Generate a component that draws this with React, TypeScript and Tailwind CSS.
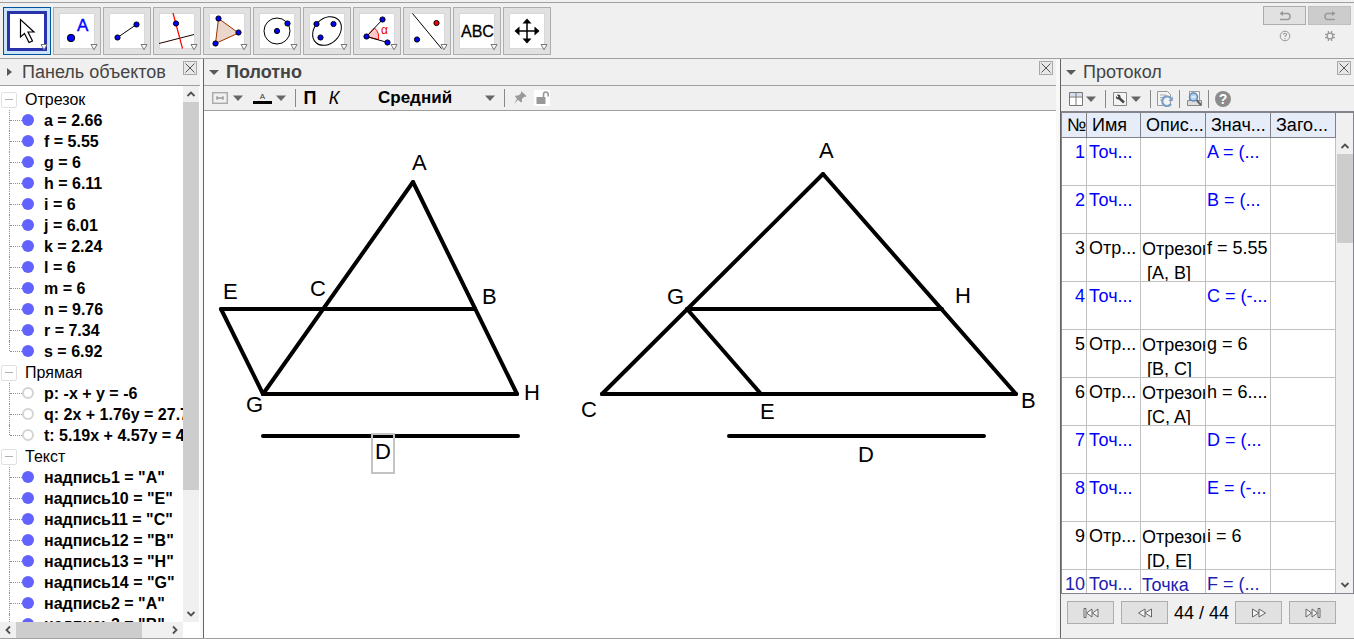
import type { ReactNode } from 'react';

type TreeGroup = {
    title: string;
    filled: boolean;
    items: string[];
};

const groups: TreeGroup[] = [
    {
        title: 'Отрезок',
        filled: true,
        items: [
            'a = 2.66',
            'f = 5.55',
            'g = 6',
            'h = 6.11',
            'i = 6',
            'j = 6.01',
            'k = 2.24',
            'l = 6',
            'm = 6',
            'n = 9.76',
            'r = 7.34',
            's = 6.92',
        ],
    },
    {
        title: 'Прямая',
        filled: false,
        items: ['p: -x + y = -6', 'q: 2x + 1.76y = 27.7', 't: 5.19x + 4.57y = 4'],
    },
    {
        title: 'Текст',
        filled: true,
        items: [
            'надпись1 = "A"',
            'надпись10 = "E"',
            'надпись11 = "C"',
            'надпись12 = "B"',
            'надпись13 = "H"',
            'надпись14 = "G"',
            'надпись2 = "A"',
            'надпись3 = "B"',
        ],
    },
];

type Step = {
    name: string;
    description?: string[];
    value: string;
    color: string;
};

const steps: Step[] = [
    { name: 'Точ...', value: 'A = (...', color: 'text-[#0000ff]' },
    { name: 'Точ...', value: 'B = (...', color: 'text-[#0000ff]' },
    { name: 'Отр...', description: ['Отрезок', '[A, B]'], value: 'f = 5.55', color: 'text-black' },
    { name: 'Точ...', value: 'C = (-...', color: 'text-[#0000ff]' },
    { name: 'Отр...', description: ['Отрезок', '[B, C]'], value: 'g = 6', color: 'text-black' },
    { name: 'Отр...', description: ['Отрезок', '[C, A]'], value: 'h = 6....', color: 'text-black' },
    { name: 'Точ...', value: 'D = (...', color: 'text-[#0000ff]' },
    { name: 'Точ...', value: 'E = (-...', color: 'text-[#0000ff]' },
    { name: 'Отр...', description: ['Отрезок', '[D, E]'], value: 'i = 6', color: 'text-black' },
    { name: 'Точ...', description: ['Точка'], value: 'F = (...', color: 'text-[#2020b0]' },
];

const segments: [number, number, number, number][] = [
    [209, 71, 59, 283],
    [209, 71, 313, 283],
    [59, 283, 313, 283],
    [17, 198, 271, 198],
    [17, 198, 59, 283],
    [59, 325, 314, 325],
    [619, 63, 398, 283],
    [619, 63, 812, 283],
    [398, 283, 812, 283],
    [483, 198, 738, 198],
    [483, 198, 557, 283],
    [525, 325, 780, 325],
];

const labels: [string, number, number][] = [
    ['A', 208, 59],
    ['E', 19, 188],
    ['C', 106, 185],
    ['B', 278, 193],
    ['G', 42, 301],
    ['H', 320, 289],
    ['D', 171, 348],
    ['A', 615, 47],
    ['G', 463, 193],
    ['H', 751, 192],
    ['C', 377, 306],
    ['E', 556, 308],
    ['B', 817, 297],
    ['D', 654, 351],
];

function Dot({ x, y, r = 2.6, fill = '#0000ff' }: { x: number; y: number; r?: number; fill?: string }) {
    return <circle cx={x} cy={y} r={r} fill={fill} stroke="#000" />;
}

const tools: { label: string; icon: ReactNode }[] = [
    {
        label: 'Перемещать',
        icon: <path d="M11.5 6.5v17.5l4-3.5 4.5 9 3.5-1.5-4.5-9h6z" fill="#fff" stroke="#000" strokeWidth="1.2" />,
    },
    {
        label: 'Точка',
        icon: (
            <>
                <Dot x={12} y={25} r={3.7} />
                <text x="18" y="18" fontSize="17" fill="#0000ff" stroke="#0000ff" strokeWidth="0.4">A</text>
            </>
        ),
    },
    {
        label: 'Отрезок',
        icon: (
            <>
                <path d="M8.5 24.5l19-13" stroke="#000" />
                <Dot x={8.5} y={24.5} />
                <Dot x={27.5} y={11.5} />
            </>
        ),
    },
    {
        label: 'Перпендикулярная прямая',
        icon: (
            <>
                <path d="M0 30.5l35-9" stroke="#200" />
                <path d="M14 0l9.5 35.5" stroke="#f00" strokeWidth="1.2" />
                <Dot x={17} y={10.5} />
            </>
        ),
    },
    {
        label: 'Многоугольник',
        icon: (
            <>
                <path d="M9.5 5.5l20 14.5-23 10.5z" fill="#ebd6cb" stroke="#993300" />
                <Dot x={9.5} y={5.5} />
                <Dot x={29.5} y={19.5} />
                <Dot x={6.5} y={30.5} />
            </>
        ),
    },
    {
        label: 'Окружность',
        icon: (
            <>
                <circle cx="18" cy="18" r="13" stroke="#000" />
                <Dot x={18} y={18} />
                <Dot x={28.5} y={10.5} />
            </>
        ),
    },
    {
        label: 'Эллипс',
        icon: (
            <>
                <ellipse cx="18" cy="18" rx="16" ry="12.5" transform="rotate(-45 18 18)" stroke="#000" />
                <Dot x={7.5} y={11} />
                <Dot x={24.5} y={11} />
                <Dot x={11.5} y={24.5} />
            </>
        ),
    },
    {
        label: 'Угол',
        icon: (
            <>
                <path d="M7.5 23.5l8-8.5a12 12 0 0 1 3.8 11.5z" fill="#ffc8c8" stroke="#f00" />
                <path d="M23.5 6.5l-16 17 21 6" stroke="#000" />
                <text x="22" y="21" fontSize="12" fill="#e00">α</text>
                <Dot x={7.5} y={23.5} />
                <Dot x={23.5} y={6.5} />
                <Dot x={28.5} y={29.5} />
            </>
        ),
    },
    {
        label: 'Отражение',
        icon: (
            <>
                <path d="M3.5 .5l29 35" stroke="#000" />
                <Dot x={8} y={26.5} />
                <Dot x={27.5} y={10} fill="#f00" />
            </>
        ),
    },
    {
        label: 'Надпись',
        icon: <text x="2" y="24" fontSize="16" fill="#000" stroke="#000" strokeWidth="0.3">ABC</text>,
    },
    {
        label: 'Переместить чертёж',
        icon: (
            <>
                <path d="M18 9v18M9 18h18" stroke="#000" strokeWidth="1.5" />
                <path d="M18 5.5l4.5 5h-9zM18 30.5l4.5-5h-9zM5.5 18l5-4.5v9zM30.5 18l-5-4.5v9z" fill="#000" />
            </>
        ),
    },
];

function Toolbar() {
    return (
        <header className="flex justify-between border-y border-[#a0a0a0] px-[3px]">
            <div className="flex gap-0.5 pt-1 pb-[3px]">
                {tools.map((tool, i) => (
                    <button
                        key={tool.label}
                        aria-label={tool.label}
                        className={`relative flex size-12 items-center justify-center border ${
                            i === 0 ? 'border-[#005499] bg-[#cce4f7]' : 'border-[#adadad] bg-[#e1e1e1]'
                        }`}
                    >
                        <span
                            className={
                                i === 0
                                    ? 'border-3 border-[#2832aa] bg-white'
                                    : 'border border-[#d8d8d8] bg-white'
                            }
                        >
                            <svg
                                viewBox="1 1 34 34"
                                className="size-[34px] overflow-visible"
                                fill="none"
                                fontFamily="Liberation Sans, sans-serif"
                            >
                                {tool.icon}
                            </svg>
                        </span>
                        <svg className="absolute right-0.5 bottom-[3px] size-2" viewBox="0 0 8 8">
                            <path d="M1 1.5h6L4 6.8z" fill="#fff" stroke="#777" />
                        </svg>
                    </button>
                ))}
            </div>
            <div className="grid grid-cols-2 content-start gap-x-0.5 gap-y-1 pt-[3px]">
                <button aria-label="Отменить" className="flex h-[19px] w-[43px] items-center justify-center border border-[#adadad] bg-[#e1e1e1]">
                    <svg className="h-2.5 w-3" viewBox="0 0 12 10" fill="none" stroke="#999" strokeWidth="1.5">
                        <path d="M1.500 2.500h7q2.500 0 2.500 3t-2.500 3H1" />
                        <path d="M.5 2.500L4 0v5z" fill="#999" stroke="none" />
                    </svg>
                </button>
                <button aria-label="Повторить" className="flex h-[19px] w-[43px] items-center justify-center border border-[#bfbfbf] bg-[#cccccc]">
                    <svg className="h-2.5 w-3" viewBox="0 0 12 10" fill="none" stroke="#999" strokeWidth="1.5">
                        <path d="M10.500 2.500h-7Q1 2.500 1 5.500t2.500 3H11" />
                        <path d="M11.500 2.500L8 0v5z" fill="#999" stroke="none" />
                    </svg>
                </button>
                <button aria-label="Справка" className="flex justify-center pt-px">
                    <svg className="size-3" viewBox="0 0 12 12" fill="none" stroke="#999">
                        <circle cx="6" cy="6" r="4.8" />
                        <path d="M4.4 4.8q0-1.6 1.6-1.6t1.6 1.3q0 .8-1.6 1.8V7M6 8v1.3" strokeWidth="1.1" />
                    </svg>
                </button>
                <button aria-label="Настройки" className="flex justify-center pt-px">
                    <svg className="size-3" viewBox="0 0 12 12" fill="none" stroke="#999">
                        <circle cx="6" cy="6" r="2.9" strokeWidth="1.4" />
                        <path
                            d="M4.4 1v2.2M7.6 1v2.2M4.4 8.8V11M7.6 8.8V11M1 4.4h2.2M1 7.6h2.2M8.800 4.400H11M8.800 7.600H11"
                            strokeWidth="1.3"
                        />
                    </svg>
                </button>
            </div>
        </header>
    );
}

function PanelTitle({ title, bold, collapsed }: { title: string; bold?: boolean; collapsed?: boolean }) {
    return (
        <div className="flex h-[27px] shrink-0 items-center border-b border-[#a0a0a0] bg-[#f0f0f0] pr-[3px]">
            <button aria-label={`Свернуть ${title}`} className="ml-[5px] w-[17px]">
                <svg className="size-2.5" viewBox="0 0 10 10" fill="#5a5a5a">
                    <path d={collapsed ? 'M2 1l5 4-5 4z' : 'M0 3h10L5 8z'} />
                </svg>
            </button>
            <h2 className={`flex-1 text-[18px] whitespace-nowrap text-[#444] ${bold ? 'font-bold' : ''}`}>{title}</h2>
            <button aria-label={`Закрыть ${title}`} className="mb-2 size-3.5 border border-[#a8a8a8] bg-[#e8e8e8]">
                <svg className="size-3" viewBox="0 0 12 12" stroke="#555">
                    <path d="M1.5 1.5l9 9M10.5 1.5l-9 9" />
                </svg>
            </button>
        </div>
    );
}

const arrowPaths = {
    up: 'M1.5 7L5 3.5 8.5 7',
    down: 'M1.5 3L5 6.5 8.5 3',
    left: 'M7 1.5L3.5 5 7 8.5',
    right: 'M3 1.5L6.5 5 3 8.5',
};

function ScrollArrow({ dir }: { dir: keyof typeof arrowPaths }) {
    return (
        <button aria-label={dir} className="flex size-4 shrink-0 items-center justify-center">
            <svg className="size-2.5" viewBox="0 0 10 10" fill="none" stroke="#505050" strokeWidth="1.8">
                <path d={arrowPaths[dir]} />
            </svg>
        </button>
    );
}

function VerticalScroll({ size }: { size: number }) {
    return (
        <div className="flex min-h-0 w-4 flex-1 flex-col bg-[#f0f0f0]">
            <ScrollArrow dir="up" />
            <div className="min-h-0 flex-1">
                <div className="bg-[#cdcdcd]" style={{ height: `${size}%` }} />
            </div>
            <ScrollArrow dir="down" />
        </div>
    );
}

function ObjectTree() {
    return (
        <ul className="pt-[3px] text-[16px] leading-[21px] whitespace-nowrap text-black">
            {groups.map((group) => (
                <li key={group.title}>
                    <div className="flex items-center pl-px">
                        <button aria-label={group.title} className="flex size-4 items-center justify-center rounded-xs border border-[#e0e0e0]">
                            <span className="h-px w-2 bg-[#b0b0b0]" />
                        </button>
                        <span className="ml-2">{group.title}</span>
                    </div>
                    <ul>
                        {group.items.map((item, i) => (
                            <li key={item} className="flex pl-[9px]">
                                <span
                                    className={`w-px shrink-0 border-l border-dotted border-[#909090] ${
                                        i === group.items.length - 1 ? 'h-2.5' : 'h-[21px]'
                                    }`}
                                />
                                <span className="mt-2.5 h-px w-3 shrink-0 border-t border-dotted border-[#909090]" />
                                <span
                                    className={`mt-1 mr-2.5 size-3 shrink-0 rounded-full ${
                                        group.filled ? 'bg-[#6262ff]' : 'border-2 border-[#d4d4d4]'
                                    }`}
                                />
                                <span className="font-bold">{item}</span>
                            </li>
                        ))}
                    </ul>
                </li>
            ))}
        </ul>
    );
}

function ObjectsPanel() {
    return (
        <aside className="flex w-[200px] shrink-0 flex-col">
            <PanelTitle title="Панель объектов" collapsed />
            <div className="flex min-h-0 flex-1 bg-white">
                <div className="flex min-w-0 flex-1 flex-col">
                    <div className="min-h-0 flex-1 overflow-hidden">
                        <ObjectTree />
                    </div>
                    <div className="flex h-4 bg-[#f0f0f0]">
                        <ScrollArrow dir="left" />
                        <div className="flex-1">
                            <div className="h-4 w-10/12 bg-[#cdcdcd]" />
                        </div>
                        <ScrollArrow dir="right" />
                    </div>
                </div>
                <div className="mr-px flex flex-col pb-4">
                    <VerticalScroll size={77} />
                </div>
            </div>
        </aside>
    );
}

function Caret() {
    return (
        <svg className="h-1.5 w-2.5 shrink-0" viewBox="0 0 10 6" fill="#666">
            <path d="M0 .5h10L5 6z" />
        </svg>
    );
}

function Divider() {
    return <span className="h-[18px] w-px bg-[#888]" />;
}

function CanvasPanel() {
    return (
        <main className="flex min-w-0 flex-1 flex-col border-l border-[#646464]">
            <PanelTitle title="Полотно" bold />
            <div className="flex h-[25px] shrink-0 items-center border-b border-[#a0a0a0] pl-2">
                <button aria-label="Подпись" className="flex items-center gap-[5px]">
                    <svg className="h-3 w-4" viewBox="0 0 16 12" fill="none" stroke="#999">
                        <rect x=".7" y=".7" width="14.6" height="10.6" strokeWidth="1.4" stroke="#aaa" />
                        <path d="M5 4.2v3.6M11 4.2v3.6M5 6h6" strokeWidth="1.4" />
                    </svg>
                    <Caret />
                </button>
                <button aria-label="Цвет текста" className="ml-2.5 flex items-center gap-1">
                    <span className="w-[19px] border-b-3 border-black text-center text-[8px] leading-[9px] text-[#333]">A</span>
                    <Caret />
                </button>
                <span className="mr-1.5 ml-[9px] flex">
                    <Divider />
                </span>
                <button className="w-4 text-[18px] leading-5 font-bold text-black">П</button>
                <button className="ml-2 w-4 text-[18px] leading-5 text-black italic">К</button>
                <div className="relative ml-9 flex w-[117px] items-center">
                    <select aria-label="Размер" className="w-full appearance-none text-[17px] leading-5 font-bold text-black">
                        <option>Средний</option>
                    </select>
                    <span className="pointer-events-none absolute right-0 flex">
                        <Caret />
                    </span>
                </div>
                <span className="ml-[9px] flex">
                    <Divider />
                </span>
                <button aria-label="Закрепить" className="ml-2">
                    <svg className="size-3.5" viewBox="0 0 14 14" fill="#999">
                        <path d="M8 0l5.5 5-1.3 1-1-.2-2.4 2.4.2 2.4-1 1L5 8.7 1 13l3-5.3L2 5.4l1-1 2.5.2 2.6-2.4z" />
                    </svg>
                </button>
                <button aria-label="Разблокировать" className="ml-[7px] bg-white">
                    <svg className="size-4" viewBox="0 0 16 16" fill="none" stroke="#999" strokeWidth="1.6">
                        <path d="M9.500 8V4.500q0-2.500 2.300-2.500T14.200 4.500v2" />
                        <path d="M2.500 7h9v7h-9z" fill="#999" stroke="none" />
                    </svg>
                </button>
            </div>
            <svg className="min-h-0 w-full flex-1 bg-white" fontFamily="Liberation Sans, sans-serif" fontSize="22">
                {segments.map(([x1, y1, x2, y2], i) => (
                    <line key={i} x1={x1} y1={y1} x2={x2} y2={y2} stroke="#000" strokeWidth="4" strokeLinecap="round" />
                ))}
                <rect x="168" y="323" width="22" height="39" fill="none" stroke="#c4c4c4" strokeWidth="2" />
                {labels.map(([name, x, y], i) => (
                    <text key={i} x={x} y={y}>
                        {name}
                    </text>
                ))}
            </svg>
        </main>
    );
}

function ProtocolToolbar() {
    return (
        <div className="flex h-[25px] shrink-0 items-center pl-2">
            <button aria-label="Столбцы" className="flex items-center gap-[3px]">
                <svg className="size-3.5" viewBox="0 0 14 14">
                    <path d="M.5 .5h13v13H.5z" fill="#fff" stroke="#777" />
                    <path d="M1 1h12v3.5H1z" fill="#d4dff0" />
                    <path d="M.5 5h13M7 .5v13" stroke="#777" />
                </svg>
                <Caret />
            </button>
            <span className="mr-[7px] ml-[9px] flex">
                <Divider />
            </span>
            <button aria-label="Параметры" className="flex items-center gap-1">
                <svg className="size-3.5" viewBox="0 0 14 14">
                    <path d="M.5 .5h13v13H.5z" fill="#f4f4f4" stroke="#888" />
                    <circle cx="5.2" cy="5" r="2.4" fill="#444" />
                    <path d="M5 5l6 5.5" stroke="#444" strokeWidth="2.4" />
                    <path d="M2.5 2.5L5 5" stroke="#f4f4f4" strokeWidth="1.2" />
                </svg>
                <Caret />
            </button>
            <span className="mr-1.5 ml-[9px] flex">
                <Divider />
            </span>
            <button aria-label="Обновить">
                <svg className="size-4" viewBox="0 0 16 16" fill="none">
                    <path d="M.5 .5h10l3 3v11H.5z" fill="#f4f4f4" stroke="#999" />
                    <path d="M3 4h6M3 6.5h4M3 9h2" stroke="#aaa" />
                    <path d="M14 7.5A4.8 4.8 0 1 0 14 13" stroke="#7b9fc9" strokeWidth="2.2" />
                    <path d="M15.8 5.5V10h-4.5z" fill="#7b9fc9" />
                </svg>
            </button>
            <span className="mr-[7px] ml-1.5 flex">
                <Divider />
            </span>
            <button aria-label="Просмотр печати">
                <svg className="size-4" viewBox="0 0 16 16" fill="none">
                    <path d="M2.5 .5h10v11h-10z" fill="#f4f4f4" stroke="#999" />
                    <path d="M.5 9.5h14v5H.5z" fill="#ddd" stroke="#888" />
                    <path d="M9.5 9l4.500 5" stroke="#666" strokeWidth="2" />
                    <circle cx="6.5" cy="6" r="4" fill="#b8d2ee" stroke="#5f87b5" strokeWidth="1.5" />
                    <path d="M4.5 6h4" stroke="#fff" />
                </svg>
            </button>
            <span className="mr-1.5 ml-[5px] flex">
                <Divider />
            </span>
            <button aria-label="Помощь" className="size-4 rounded-full bg-[#8c8c8c] text-[14px] leading-4 font-bold text-white">
                ?
            </button>
        </div>
    );
}

function ProtocolTable() {
    return (
        <table className="w-[274px] table-fixed border-separate border-spacing-0 text-[18px] whitespace-nowrap">
            <colgroup>
                <col className="w-[25px]" />
                <col className="w-[54px]" />
                <col className="w-[65px]" />
                <col className="w-[65px]" />
                <col className="w-[65px]" />
            </colgroup>
            <thead>
                <tr className="bg-[#e6edf8] text-left leading-6 text-black">
                    {['№', 'Имя', 'Опис...', 'Знач...', 'Заго...'].map((title) => (
                        <th key={title} className="overflow-hidden border-r border-b border-[#7f8088] p-0 pl-[5px] font-normal">
                            {title}
                        </th>
                    ))}
                </tr>
            </thead>
            <tbody className="leading-6">
                {steps.map((step, i) => (
                    <tr key={i} className={`h-12 bg-white align-top ${step.color}`}>
                        <td className="border-r border-b border-[#c0c0c0] p-0 pt-0.5 pr-px text-right">{i + 1}</td>
                        <td className="border-r border-b border-[#c0c0c0] p-0 pt-0.5 pl-0.5">{step.name}</td>
                        <td className="border-r border-b border-[#c0c0c0] p-0">
                            <div className="h-[47px] overflow-hidden pt-[3px] pl-px">
                                {step.description?.map((line, n) => (
                                    <div key={line} className={n === 0 ? '' : 'pl-[5px]'}>
                                        {line}
                                    </div>
                                ))}
                            </div>
                        </td>
                        <td className="border-r border-b border-[#c0c0c0] p-0 pt-0.5 pl-px">{step.value}</td>
                        <td className="border-r border-b border-[#c0c0c0] p-0" />
                    </tr>
                ))}
            </tbody>
        </table>
    );
}

function StepButton({ label, flip, end }: { label: string; flip?: boolean; end?: boolean }) {
    return (
        <button aria-label={label} className="flex h-[23px] w-[47px] items-center justify-center border border-[#adadad] bg-[#e1e1e1]">
            <svg
                className={`h-2.5 w-4 ${flip ? '-scale-x-100' : ''}`}
                viewBox="0 0 16 10"
                fill="#f4f4f4"
                stroke="#666"
            >
                <path d={end ? 'M1 1l5.5 4L1 9zM7 1l5.5 4L7 9zM13 .5h2v9h-2z' : 'M1.500 1L8 5l-6.500 4zM8 1l6.500 4L8 9z'} />
            </svg>
        </button>
    );
}

function ProtocolPanel() {
    return (
        <aside className="flex w-[294px] shrink-0 flex-col border-l border-[#646464]">
            <PanelTitle title="Протокол" />
            <ProtocolToolbar />
            <div className="flex min-h-0 flex-1 border-t-2 border-r border-b border-l border-[#84858c]">
                <div className="min-w-0 flex-1 overflow-hidden bg-[#f0f0f0]">
                    <ProtocolTable />
                </div>
                <div className="flex flex-col pt-[25px]">
                    <VerticalScroll size={21} />
                </div>
            </div>
            <nav className="flex h-11 shrink-0 items-start pt-[7px] pl-1.5">
                <StepButton label="К первому шагу" flip end />
                <span className="ml-[7px] flex">
                    <StepButton label="Назад" flip />
                </span>
                <span className="w-[67px] text-center text-[18px] leading-6 text-black">44 / 44</span>
                <StepButton label="Вперёд" />
                <span className="ml-[7px] flex">
                    <StepButton label="К последнему шагу" end />
                </span>
            </nav>
        </aside>
    );
}

export default function App() {
    return (
        <div className="flex h-screen flex-col overflow-hidden bg-[#f0f0f0] pt-0.5 font-['Liberation_Sans',Arial,sans-serif]">
            <Toolbar />
            <div className="flex min-h-0 flex-1 border-b border-[#a0a0a0]">
                <ObjectsPanel />
                <div className="w-[3px] shrink-0 bg-[#f8f8f8]" />
                <CanvasPanel />
                <div className="w-1 shrink-0 bg-[#f8f8f8]" />
                <ProtocolPanel />
            </div>
        </div>
    );
}
